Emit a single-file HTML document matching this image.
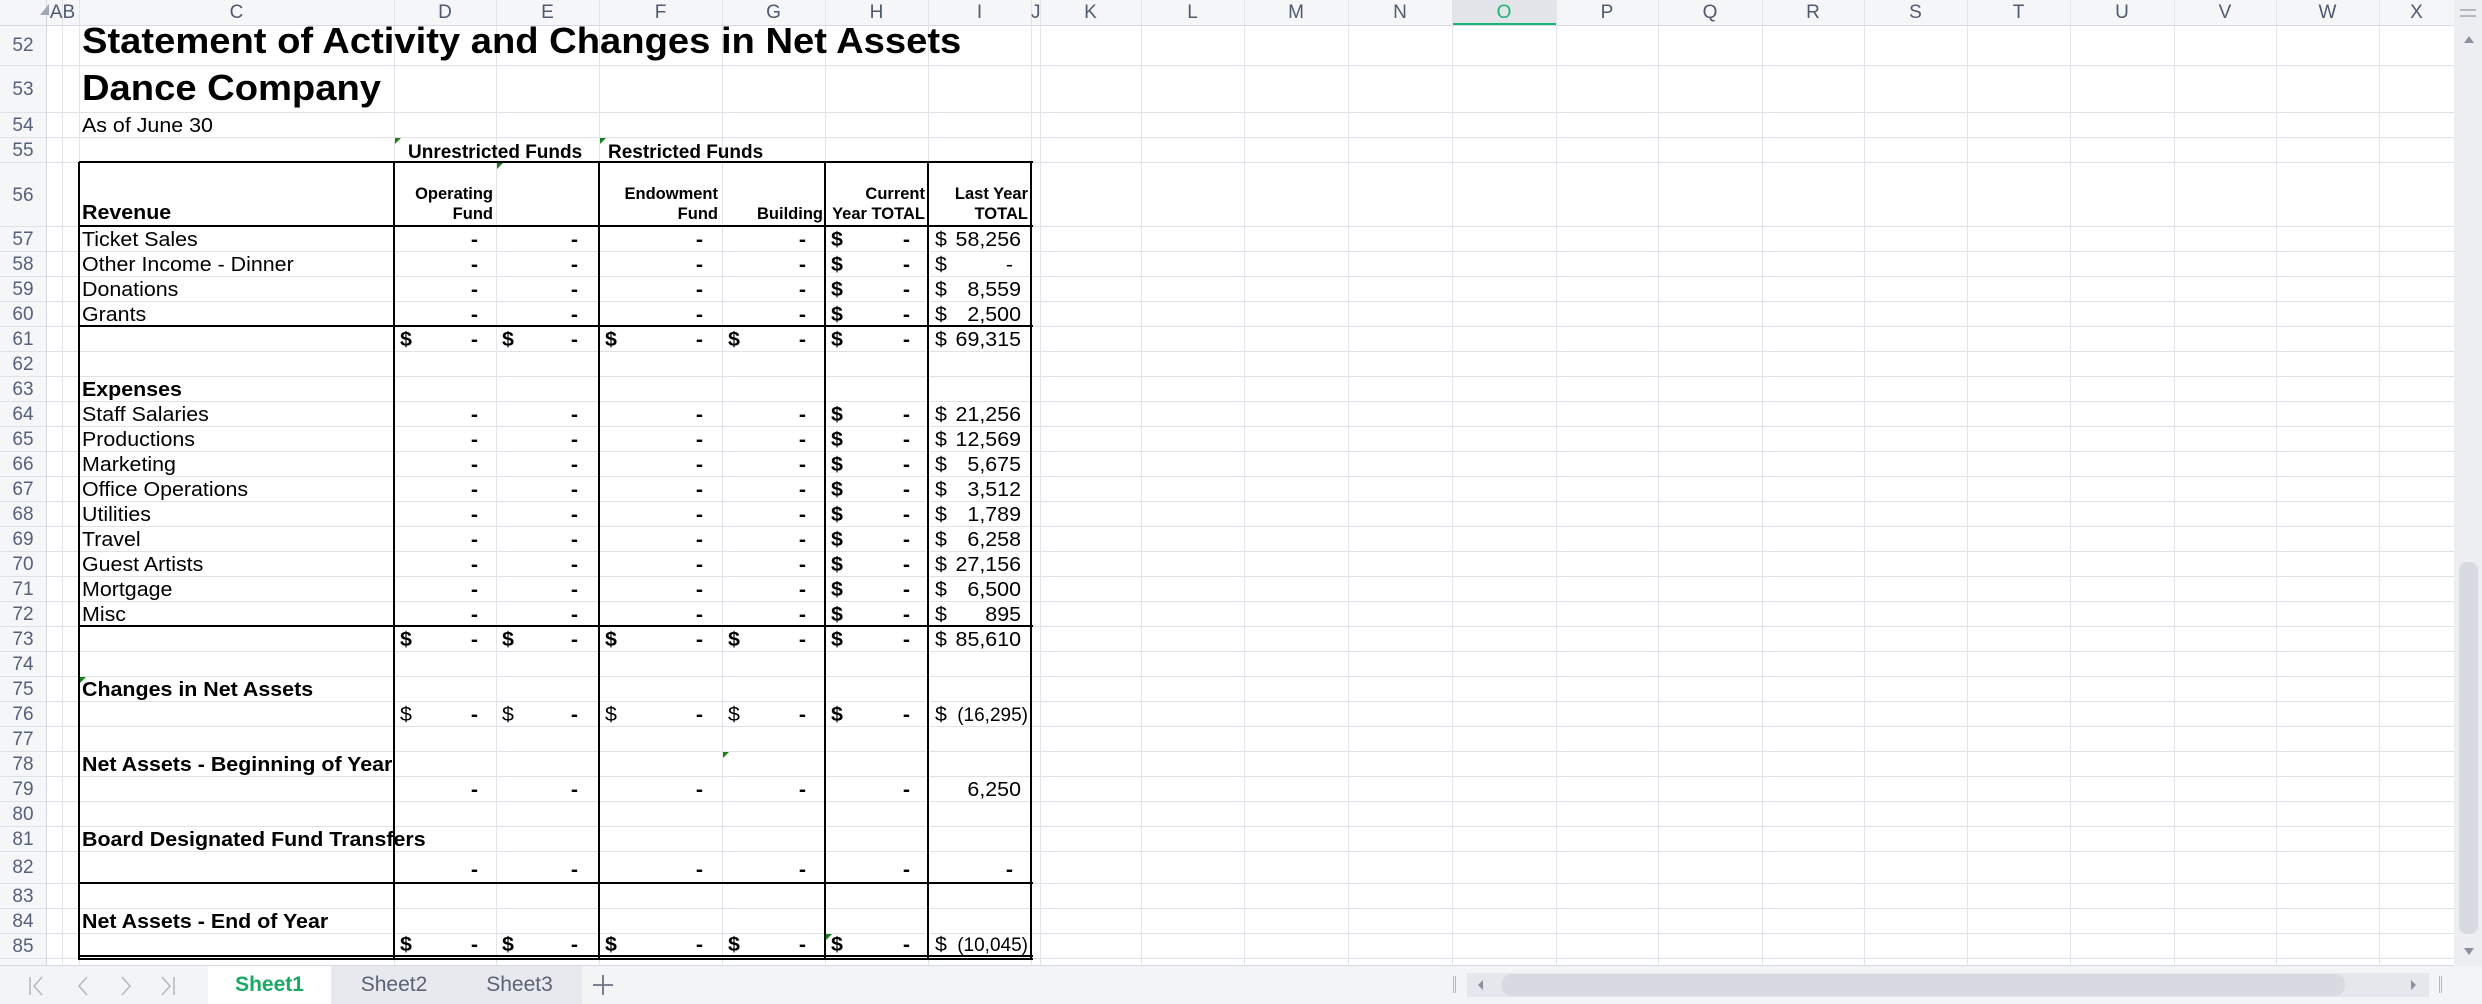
<!DOCTYPE html>
<html><head><meta charset="utf-8">
<style>
*{margin:0;padding:0;box-sizing:border-box}
body{width:2482px;height:1004px;overflow:hidden;background:#fff;position:relative;font-family:"Liberation Sans",Arial,sans-serif;color:#000}
div{position:absolute}
.hl{height:1px;left:0;width:2454px;background:#dde1e8}
.vl{width:1px;top:0;height:966px;background:#e1e4ea}
.bh{height:2px;left:79px;width:954px;background:#000}
.bv{width:2px;top:162px;height:798px;background:#000}
.ch{top:0;height:25px;line-height:25px;text-align:center;font-size:19px;color:#4f5a6e}
.rn{left:0;width:46px;text-align:center;font-size:19px;color:#56607a;line-height:25px}
.t{font-size:20px;line-height:25px;white-space:nowrap;transform:scaleX(1.07);transform-origin:0 50%}
.b{font-weight:bold}
.d{left:394px;width:84px;text-align:right}
.e{left:496px;width:82px;text-align:right}
.f{left:599px;width:104px;text-align:right}
.g{left:722px;width:84px;text-align:right}
.h{left:825px;width:85px;text-align:right}
.i{left:928px;width:93px;text-align:right}
.ix{left:928px;width:100px;text-align:right}
.idash{left:928px;width:85px;text-align:right}
.d,.e,.f,.g,.h,.i,.ix,.idash{transform-origin:100% 50%}
.ix{transform:none;font-size:19px}
.sd{left:400px}.se{left:502px}.sf{left:605px}.sg{left:728px}.sh{left:831px}.si{left:935px}
.hd{font-size:16.5px;font-weight:bold;line-height:20px;text-align:right;white-space:nowrap}
.tri{width:0;height:0;border-top:6px solid #1a7f1a;border-right:6px solid transparent}
</style></head><body>

<div style="left:0;top:0;width:2454px;height:25px;background:#f5f6f8"></div>
<div style="left:0;top:25px;width:46px;height:941px;background:#f5f6f8"></div>
<div style="left:1452px;top:0;width:104px;height:25px;background:#e4e5ea"></div>
<div style="left:1452px;top:23px;width:104px;height:3px;background:#1db574"></div>

<div class="hl" style="top:25px;background:#d4d8e0"></div>
<div class="hl" style="top:65px"></div><div class="hl" style="top:112px"></div><div class="hl" style="top:137px"></div><div class="hl" style="top:162px"></div>
<div class="hl" style="top:226px"></div><div class="hl" style="top:251px"></div><div class="hl" style="top:276px"></div><div class="hl" style="top:301px"></div><div class="hl" style="top:326px"></div><div class="hl" style="top:351px"></div><div class="hl" style="top:376px"></div><div class="hl" style="top:401px"></div><div class="hl" style="top:426px"></div><div class="hl" style="top:451px"></div><div class="hl" style="top:476px"></div><div class="hl" style="top:501px"></div><div class="hl" style="top:526px"></div><div class="hl" style="top:551px"></div><div class="hl" style="top:576px"></div><div class="hl" style="top:601px"></div><div class="hl" style="top:626px"></div><div class="hl" style="top:651px"></div><div class="hl" style="top:676px"></div><div class="hl" style="top:701px"></div><div class="hl" style="top:726px"></div><div class="hl" style="top:751px"></div><div class="hl" style="top:776px"></div><div class="hl" style="top:801px"></div><div class="hl" style="top:826px"></div><div class="hl" style="top:851px"></div><div class="hl" style="top:883px"></div><div class="hl" style="top:908px"></div><div class="hl" style="top:933px"></div><div class="hl" style="top:958px"></div><div class="hl" style="top:965px;background:#d4d8e0"></div>

<div class="vl" style="left:46px;background:#d4d8e0"></div><div class="vl" style="left:62px"></div><div class="vl" style="left:79px"></div><div class="vl" style="left:394px"></div><div class="vl" style="left:496px"></div><div class="vl" style="left:599px"></div><div class="vl" style="left:722px"></div><div class="vl" style="left:825px"></div><div class="vl" style="left:928px"></div><div class="vl" style="left:1031px"></div><div class="vl" style="left:1040px"></div><div class="vl" style="left:1141px"></div><div class="vl" style="left:1244px"></div><div class="vl" style="left:1348px"></div><div class="vl" style="left:1452px"></div><div class="vl" style="left:1556px"></div><div class="vl" style="left:1658px"></div><div class="vl" style="left:1762px"></div><div class="vl" style="left:1864px"></div><div class="vl" style="left:1967px"></div><div class="vl" style="left:2070px"></div><div class="vl" style="left:2174px"></div><div class="vl" style="left:2276px"></div><div class="vl" style="left:2379px"></div>

<div style="left:40px;top:4px;width:0;height:0;border-left:9px solid transparent;border-bottom:11px solid #a0a6b2"></div>
<div class="ch" style="left:46px;width:33px">AB</div>
<div class="ch" style="left:79px;width:315px">C</div>
<div class="ch" style="left:394px;width:102px">D</div>
<div class="ch" style="left:496px;width:103px">E</div>
<div class="ch" style="left:599px;width:123px">F</div>
<div class="ch" style="left:722px;width:103px">G</div>
<div class="ch" style="left:825px;width:103px">H</div>
<div class="ch" style="left:928px;width:103px">I</div>
<div class="ch" style="left:1031px;width:9px">J</div>
<div class="ch" style="left:1040px;width:101px">K</div>
<div class="ch" style="left:1141px;width:103px">L</div>
<div class="ch" style="left:1244px;width:104px">M</div>
<div class="ch" style="left:1348px;width:104px">N</div>
<div class="ch" style="left:1452px;width:104px;color:#1db574">O</div>
<div class="ch" style="left:1556px;width:102px">P</div>
<div class="ch" style="left:1658px;width:104px">Q</div>
<div class="ch" style="left:1762px;width:102px">R</div>
<div class="ch" style="left:1864px;width:103px">S</div>
<div class="ch" style="left:1967px;width:103px">T</div>
<div class="ch" style="left:2070px;width:104px">U</div>
<div class="ch" style="left:2174px;width:102px">V</div>
<div class="ch" style="left:2276px;width:103px">W</div>
<div class="ch" style="left:2379px;width:75px">X</div>

<div class="rn" style="top:33px">52</div>
<div class="rn" style="top:77px">53</div>
<div class="rn" style="top:113px">54</div>
<div class="rn" style="top:138px">55</div>
<div class="rn" style="top:183px">56</div>
<div class="rn" style="top:227px">57</div><div class="rn" style="top:252px">58</div><div class="rn" style="top:277px">59</div><div class="rn" style="top:302px">60</div><div class="rn" style="top:327px">61</div><div class="rn" style="top:352px">62</div><div class="rn" style="top:377px">63</div><div class="rn" style="top:402px">64</div><div class="rn" style="top:427px">65</div><div class="rn" style="top:452px">66</div><div class="rn" style="top:477px">67</div><div class="rn" style="top:502px">68</div><div class="rn" style="top:527px">69</div><div class="rn" style="top:552px">70</div><div class="rn" style="top:577px">71</div><div class="rn" style="top:602px">72</div><div class="rn" style="top:627px">73</div><div class="rn" style="top:652px">74</div><div class="rn" style="top:677px">75</div><div class="rn" style="top:702px">76</div><div class="rn" style="top:727px">77</div><div class="rn" style="top:752px">78</div><div class="rn" style="top:777px">79</div><div class="rn" style="top:802px">80</div><div class="rn" style="top:827px">81</div><div class="rn" style="top:855px">82</div><div class="rn" style="top:884px">83</div><div class="rn" style="top:909px">84</div><div class="rn" style="top:934px">85</div>

<div class="bh" style="top:161px"></div><div class="bh" style="top:225px"></div><div class="bh" style="top:325px"></div><div class="bh" style="top:625px"></div><div class="bh" style="top:882px"></div><div class="bh" style="top:955px;height:1.5px"></div><div class="bh" style="top:958px;height:1.5px"></div>
<div class="bv" style="left:78px"></div><div class="bv" style="left:393px"></div><div class="bv" style="left:598px"></div><div class="bv" style="left:824px"></div><div class="bv" style="left:927px"></div><div class="bv" style="left:1030px"></div>

<div class="tri" style="left:395px;top:138px"></div>
<div class="tri" style="left:600px;top:138px"></div>
<div class="tri" style="left:497px;top:163px"></div>
<div class="tri" style="left:80px;top:677px"></div>
<div class="tri" style="left:723px;top:752px"></div>
<div class="tri" style="left:826px;top:934px"></div>

<div class="t b" style="left:82px;top:23px;font-size:36px;line-height:36px;transform:scaleX(1.06)">Statement of Activity and Changes in Net Assets</div>
<div class="t b" style="left:82px;top:70px;font-size:36px;line-height:36px;transform:scaleX(1.06)">Dance Company</div>
<div class="t" style="left:82px;top:114px">As of June 30</div>
<div class="t b" style="left:408px;top:140px;font-size:19px;transform:none">Unrestricted Funds</div>
<div class="t b" style="left:608px;top:140px;font-size:19px;transform:none">Restricted Funds</div>

<div class="t b" style="left:82px;top:201px">Revenue</div>
<div class="hd" style="left:394px;width:99px;top:184px">Operating<br>Fund</div>
<div class="hd" style="left:599px;width:119px;top:184px">Endowment<br>Fund</div>
<div class="hd" style="left:722px;width:101px;top:204px">Building</div>
<div class="hd" style="left:825px;width:100px;top:184px">Current<br>Year TOTAL</div>
<div class="hd" style="left:928px;width:100px;top:184px">Last Year<br>TOTAL</div>

<div class="t" style="left:82px;top:228px">Ticket Sales</div>
<div class="t b d" style="top:228px">-</div><div class="t b e" style="top:228px">-</div><div class="t b f" style="top:228px">-</div><div class="t b g" style="top:228px">-</div><div class="t b sh" style="top:228px">$</div><div class="t b h" style="top:228px">-</div><div class="t si" style="top:228px">$</div><div class="t i" style="top:228px">58,256</div>
<div class="t" style="left:82px;top:253px">Other Income - Dinner</div>
<div class="t b d" style="top:253px">-</div><div class="t b e" style="top:253px">-</div><div class="t b f" style="top:253px">-</div><div class="t b g" style="top:253px">-</div><div class="t b sh" style="top:253px">$</div><div class="t b h" style="top:253px">-</div><div class="t si" style="top:253px">$</div><div class="t idash" style="top:253px">-</div>
<div class="t" style="left:82px;top:278px">Donations</div>
<div class="t b d" style="top:278px">-</div><div class="t b e" style="top:278px">-</div><div class="t b f" style="top:278px">-</div><div class="t b g" style="top:278px">-</div><div class="t b sh" style="top:278px">$</div><div class="t b h" style="top:278px">-</div><div class="t si" style="top:278px">$</div><div class="t i" style="top:278px">8,559</div>
<div class="t" style="left:82px;top:303px">Grants</div>
<div class="t b d" style="top:303px">-</div><div class="t b e" style="top:303px">-</div><div class="t b f" style="top:303px">-</div><div class="t b g" style="top:303px">-</div><div class="t b sh" style="top:303px">$</div><div class="t b h" style="top:303px">-</div><div class="t si" style="top:303px">$</div><div class="t i" style="top:303px">2,500</div>
<div class="t b sd" style="top:328px">$</div><div class="t b d" style="top:328px">-</div><div class="t b se" style="top:328px">$</div><div class="t b e" style="top:328px">-</div><div class="t b sf" style="top:328px">$</div><div class="t b f" style="top:328px">-</div><div class="t b sg" style="top:328px">$</div><div class="t b g" style="top:328px">-</div><div class="t b sh" style="top:328px">$</div><div class="t b h" style="top:328px">-</div><div class="t si" style="top:328px">$</div><div class="t i" style="top:328px">69,315</div>

<div class="t b" style="left:82px;top:378px">Expenses</div>
<div class="t" style="left:82px;top:403px">Staff Salaries</div>
<div class="t b d" style="top:403px">-</div><div class="t b e" style="top:403px">-</div><div class="t b f" style="top:403px">-</div><div class="t b g" style="top:403px">-</div><div class="t b sh" style="top:403px">$</div><div class="t b h" style="top:403px">-</div><div class="t si" style="top:403px">$</div><div class="t i" style="top:403px">21,256</div>
<div class="t" style="left:82px;top:428px">Productions</div>
<div class="t b d" style="top:428px">-</div><div class="t b e" style="top:428px">-</div><div class="t b f" style="top:428px">-</div><div class="t b g" style="top:428px">-</div><div class="t b sh" style="top:428px">$</div><div class="t b h" style="top:428px">-</div><div class="t si" style="top:428px">$</div><div class="t i" style="top:428px">12,569</div>
<div class="t" style="left:82px;top:453px">Marketing</div>
<div class="t b d" style="top:453px">-</div><div class="t b e" style="top:453px">-</div><div class="t b f" style="top:453px">-</div><div class="t b g" style="top:453px">-</div><div class="t b sh" style="top:453px">$</div><div class="t b h" style="top:453px">-</div><div class="t si" style="top:453px">$</div><div class="t i" style="top:453px">5,675</div>
<div class="t" style="left:82px;top:478px">Office Operations</div>
<div class="t b d" style="top:478px">-</div><div class="t b e" style="top:478px">-</div><div class="t b f" style="top:478px">-</div><div class="t b g" style="top:478px">-</div><div class="t b sh" style="top:478px">$</div><div class="t b h" style="top:478px">-</div><div class="t si" style="top:478px">$</div><div class="t i" style="top:478px">3,512</div>
<div class="t" style="left:82px;top:503px">Utilities</div>
<div class="t b d" style="top:503px">-</div><div class="t b e" style="top:503px">-</div><div class="t b f" style="top:503px">-</div><div class="t b g" style="top:503px">-</div><div class="t b sh" style="top:503px">$</div><div class="t b h" style="top:503px">-</div><div class="t si" style="top:503px">$</div><div class="t i" style="top:503px">1,789</div>
<div class="t" style="left:82px;top:528px">Travel</div>
<div class="t b d" style="top:528px">-</div><div class="t b e" style="top:528px">-</div><div class="t b f" style="top:528px">-</div><div class="t b g" style="top:528px">-</div><div class="t b sh" style="top:528px">$</div><div class="t b h" style="top:528px">-</div><div class="t si" style="top:528px">$</div><div class="t i" style="top:528px">6,258</div>
<div class="t" style="left:82px;top:553px">Guest Artists</div>
<div class="t b d" style="top:553px">-</div><div class="t b e" style="top:553px">-</div><div class="t b f" style="top:553px">-</div><div class="t b g" style="top:553px">-</div><div class="t b sh" style="top:553px">$</div><div class="t b h" style="top:553px">-</div><div class="t si" style="top:553px">$</div><div class="t i" style="top:553px">27,156</div>
<div class="t" style="left:82px;top:578px">Mortgage</div>
<div class="t b d" style="top:578px">-</div><div class="t b e" style="top:578px">-</div><div class="t b f" style="top:578px">-</div><div class="t b g" style="top:578px">-</div><div class="t b sh" style="top:578px">$</div><div class="t b h" style="top:578px">-</div><div class="t si" style="top:578px">$</div><div class="t i" style="top:578px">6,500</div>
<div class="t" style="left:82px;top:603px">Misc</div>
<div class="t b d" style="top:603px">-</div><div class="t b e" style="top:603px">-</div><div class="t b f" style="top:603px">-</div><div class="t b g" style="top:603px">-</div><div class="t b sh" style="top:603px">$</div><div class="t b h" style="top:603px">-</div><div class="t si" style="top:603px">$</div><div class="t i" style="top:603px">895</div>
<div class="t b sd" style="top:628px">$</div><div class="t b d" style="top:628px">-</div><div class="t b se" style="top:628px">$</div><div class="t b e" style="top:628px">-</div><div class="t b sf" style="top:628px">$</div><div class="t b f" style="top:628px">-</div><div class="t b sg" style="top:628px">$</div><div class="t b g" style="top:628px">-</div><div class="t b sh" style="top:628px">$</div><div class="t b h" style="top:628px">-</div><div class="t si" style="top:628px">$</div><div class="t i" style="top:628px">85,610</div>

<div class="t b" style="left:82px;top:678px">Changes in Net Assets</div>
<div class="t sd" style="top:703px">$</div><div class="t b d" style="top:703px">-</div><div class="t se" style="top:703px">$</div><div class="t b e" style="top:703px">-</div><div class="t sf" style="top:703px">$</div><div class="t b f" style="top:703px">-</div><div class="t sg" style="top:703px">$</div><div class="t b g" style="top:703px">-</div><div class="t b sh" style="top:703px">$</div><div class="t b h" style="top:703px">-</div><div class="t si" style="top:703px">$</div><div class="t ix" style="top:703px">(16,295)</div>

<div class="t b" style="left:82px;top:753px">Net Assets - Beginning of Year</div>
<div class="t b d" style="top:778px">-</div><div class="t b e" style="top:778px">-</div><div class="t b f" style="top:778px">-</div><div class="t b g" style="top:778px">-</div><div class="t b h" style="top:778px">-</div><div class="t i" style="top:778px">6,250</div>

<div class="t b" style="left:82px;top:828px">Board Designated Fund Transfers</div>
<div class="t b d" style="top:858px">-</div><div class="t b e" style="top:858px">-</div><div class="t b f" style="top:858px">-</div><div class="t b g" style="top:858px">-</div><div class="t b h" style="top:858px">-</div><div class="t b idash" style="top:858px">-</div>

<div class="t b" style="left:82px;top:910px">Net Assets - End of Year</div>
<div class="t b sd" style="top:933px">$</div><div class="t b d" style="top:933px">-</div><div class="t b se" style="top:933px">$</div><div class="t b e" style="top:933px">-</div><div class="t b sf" style="top:933px">$</div><div class="t b f" style="top:933px">-</div><div class="t b sg" style="top:933px">$</div><div class="t b g" style="top:933px">-</div><div class="t b sh" style="top:933px">$</div><div class="t b h" style="top:933px">-</div><div class="t si" style="top:933px">$</div><div class="t ix" style="top:933px">(10,045)</div>

<div style="left:2454px;top:0;width:28px;height:966px;background:#eceef2"></div>
<div style="left:2460px;top:9px;width:16px;height:2px;background:#b4b8c4"></div>
<div style="left:2460px;top:15px;width:16px;height:2px;background:#b4b8c4"></div>
<div style="left:2464px;top:36px;width:0;height:0;border-left:5px solid transparent;border-right:5px solid transparent;border-bottom:7px solid #8a90a0"></div>
<div style="left:2459px;top:562px;width:19px;height:372px;background:#d8dae1;border-radius:8px"></div>
<div style="left:2464px;top:948px;width:0;height:0;border-left:5px solid transparent;border-right:5px solid transparent;border-top:7px solid #8a90a0"></div>

<div style="left:0;top:966px;width:2482px;height:38px;background:#f3f4f6"></div>
<svg style="position:absolute;left:20px;top:972px" width="170" height="28" viewBox="0 0 170 28" fill="none" stroke="#b3b7c0" stroke-width="1.5">
<path d="M10 5v18M22 5l-8 9 8 9"/>
<path d="M67 5l-8 9 8 9"/>
<path d="M102 5l8 9-8 9"/>
<path d="M142 5l8 9-8 9M154 5v18"/>
</svg>
<div style="left:208px;top:966px;width:123px;height:38px;background:#fff"></div>
<div style="left:331px;top:966px;width:251px;height:38px;background:#e8e9ee"></div>
<div class="t b" style="left:208px;top:972px;width:123px;text-align:center;font-size:21px;color:#1aa865;transform:none">Sheet1</div>
<div class="t" style="left:331px;top:972px;width:126px;text-align:center;font-size:21px;color:#5a6376;transform:none">Sheet2</div>
<div class="t" style="left:457px;top:972px;width:125px;text-align:center;font-size:21px;color:#5a6376;transform:none">Sheet3</div>
<svg style="position:absolute;left:591px;top:973px" width="24" height="24" stroke="#6b7283" stroke-width="1.8"><path d="M12 2v20M2 12h20"/></svg>

<div style="left:1453px;top:976px;width:1px;height:17px;background:#b3b7c0"></div>
<div style="left:1455px;top:976px;width:1px;height:17px;background:#b3b7c0"></div>
<div style="left:1467px;top:973px;width:962px;height:24px;background:#e6e7ec"></div>
<div style="left:1502px;top:974px;width:843px;height:22px;background:#d8dae1;border-radius:10px"></div>
<div style="left:1478px;top:980px;width:0;height:0;border-top:5px solid transparent;border-bottom:5px solid transparent;border-right:5px solid #8a90a0"></div>
<div style="left:2411px;top:980px;width:0;height:0;border-top:5px solid transparent;border-bottom:5px solid transparent;border-left:5px solid #8a90a0"></div>
<div style="left:2439px;top:976px;width:1px;height:17px;background:#b3b7c0"></div>
<div style="left:2441px;top:976px;width:1px;height:17px;background:#b3b7c0"></div>
</body></html>
